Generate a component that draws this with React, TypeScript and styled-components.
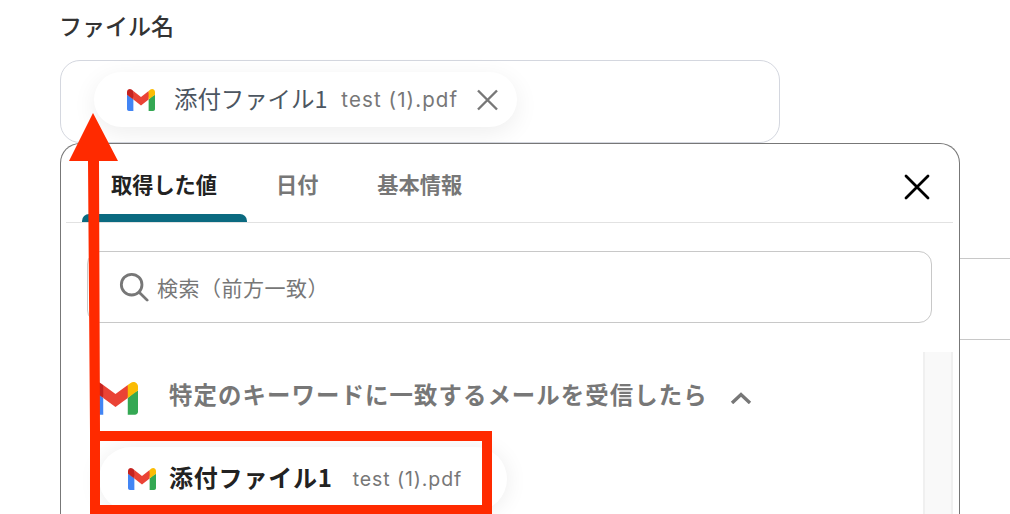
import React from "react";
import styled, { createGlobalStyle } from "styled-components";

const GlobalStyle = createGlobalStyle`
    html, body {
        margin: 0;
        padding: 0;
        background: #fff;
        font-family: "Noto Sans CJK JP", "Noto Sans", sans-serif;
    }
`;

const Page = styled.div`
    position: relative;
    width: 1010px;
    height: 514px;
    overflow: hidden;
    padding-left: 60px;
    box-sizing: border-box;
`;

const FieldLabel = styled.div`
    height: 60px;
    padding-top: 8px;
    margin-left: -1px;
    box-sizing: border-box;
    font-size: 23px;
    line-height: 34px;
    font-weight: 500;
    color: #333;
`;

const Field = styled.div`
    width: 720px;
    height: 83px;
    box-sizing: border-box;
    border: 1px solid #d4d7df;
    border-radius: 20px;
    padding: 11px 0 0 33px;
`;

const Chip = styled.div`
    display: inline-flex;
    align-items: center;
    height: 55px;
    width: 423px;
    box-sizing: border-box;
    padding-left: 33px;
    background: #fff;
    border-radius: 28px;
    box-shadow: 0 6px 24px rgba(0, 0, 0, 0.07);
`;

const ChipName = styled.span`
    margin: 0 0 3px 19px;
    font-size: 23.5px;
    line-height: 30px;
    letter-spacing: -0.1px;
    color: #4c5661;
`;

const FileName = styled.span<{ $left: number; $size: number; $spacing: number }>`
    margin-left: ${(p) => p.$left}px;
    margin-bottom: 1px;
    font-family: "Inter", "Noto Sans", sans-serif;
    font-size: ${(p) => p.$size}px;
    letter-spacing: ${(p) => p.$spacing}px;
    color: #777;
`;

const ChipClose = styled.svg`
    margin-left: 17px;
    width: 24px;
    height: 24px;
    stroke: #777;
    stroke-width: 2.4;
    fill: none;
`;

const PanelRow = styled.div`
    display: flex;
    align-items: flex-start;
`;

const Panel = styled.div`
    position: relative;
    width: 900px;
    height: 420px;
    flex: none;
    box-sizing: border-box;
    background: #fff;
    border: 1px solid #777;
    border-bottom: none;
    border-radius: 20px 20px 0 0;
    padding: 0 6px 0 5px;
`;

const BehindInput = styled.div`
    flex: 1;
    height: 80px;
    margin-top: 115px;
    border-top: 1px solid #c8c8c8;
    border-bottom: 1px solid #c8c8c8;
`;

const TabBar = styled.div`
    display: flex;
    align-items: center;
    height: 79px;
    box-sizing: border-box;
    padding-left: 16px;
    border-bottom: 1px solid #e2e2e2;
`;

const Tab = styled.div<{ $active?: boolean }>`
    position: relative;
    height: 78px;
    box-sizing: border-box;
    padding: 0 30px 0 29px;
    display: flex;
    align-items: center;
    font-size: 21.2px;
    font-weight: 700;
    color: ${(p) => (p.$active ? "#222" : "#777")};

    &::after {
        content: "";
        display: ${(p) => (p.$active ? "block" : "none")};
        position: absolute;
        left: 0;
        right: 0;
        bottom: 0;
        height: 8px;
        background: #0b6a80;
        border-radius: 7px 7px 0 0;
    }
`;

const CloseButton = styled.svg`
    margin: 7px 23px 0 auto;
    width: 26px;
    height: 26px;
    stroke: #000;
    stroke-width: 2.8;
    stroke-linecap: round;
    fill: none;
`;

const SearchBox = styled.div`
    display: flex;
    align-items: center;
    height: 72px;
    box-sizing: border-box;
    margin: 28px 21px 0 21px;
    padding-left: 31px;
    border: 1px solid #c8c8c8;
    border-radius: 13px;
`;

const SearchIcon = styled.svg`
    width: 30px;
    height: 30px;
    flex: none;
    stroke: #777;
    stroke-width: 3;
    stroke-linecap: round;
    fill: none;
`;

const SearchText = styled.span`
    margin-left: 8px;
    font-size: 21px;
    letter-spacing: 0.5px;
    color: #777;
`;

const ListArea = styled.div`
    display: flex;
    margin-top: 29px;
    height: 200px;
`;

const ListBody = styled.div`
    flex: 1;
    padding: 29px 0 0 27px;
`;

const GroupRow = styled.div`
    display: flex;
    align-items: center;
    height: 34px;
`;

const GroupTitle = styled.span`
    margin: 0 0 8px 31px;
    font-size: 23.4px;
    font-weight: 700;
    letter-spacing: 1.1px;
    color: #777;
`;

const Chevron = styled.svg`
    margin-left: 22px;
    width: 22px;
    height: 12px;
    stroke: #777;
    stroke-width: 3.4;
    fill: none;
`;

const ValueChip = styled.div`
    display: flex;
    align-items: center;
    width: 408px;
    height: 64px;
    margin: 32px 0 0 6px;
    padding-left: 29px;
    box-sizing: border-box;
    background: #fff;
    border-radius: 32px;
    box-shadow: 0 2px 22px rgba(0, 0, 0, 0.08);
`;

const ValueName = styled.span`
    margin: 0 0 5px 13px;
    font-size: 24px;
    font-weight: 700;
    letter-spacing: 0.8px;
    color: #222;
`;

const ScrollTrack = styled.div`
    width: 30px;
    flex: none;
    box-sizing: border-box;
    background: #f9f9f9;
    border-left: 2px solid #f0f0f0;
    border-right: 2px solid #f0f0f0;
`;

const Annotation = styled.svg`
    position: absolute;
    left: 0;
    top: 0;
    width: 1010px;
    height: 514px;
    pointer-events: none;
`;

const GmailMark = ({ width, height }: { width: number; height: number }) => (
    <svg width={width} height={height} viewBox="0 0 256 193" preserveAspectRatio="none" style={{ flex: "none" }}>
        <path fill="#4285F4" d="M58.182 192.05V93.14L27.507 65.077 0 49.504v125.091c0 9.658 7.825 17.455 17.455 17.455h40.727Z" />
        <path fill="#34A853" d="M197.818 192.05h40.727c9.659 0 17.455-7.826 17.455-17.455V49.505l-31.156 17.837-27.026 25.798v98.91Z" />
        <path fill="#EA4335" d="m58.182 93.14-4.174-38.647 4.174-36.989L128 69.868l69.818-52.364 4.669 34.992-4.669 40.644L128 145.504z" />
        <path fill="#FBBC04" d="M197.818 17.504V93.14L256 49.504V26.231c0-21.585-24.64-33.89-41.89-20.945l-16.292 12.218Z" />
        <path fill="#C5221F" d="M0 49.504l26.759 20.07L58.182 93.14V17.504L41.89 5.286C24.61-7.66 0 4.646 0 26.23v23.273Z" />
    </svg>
);

const App = () => {
    return (
        <Page>
            <GlobalStyle />
            <FieldLabel>ファイル名</FieldLabel>
            <Field>
                <Chip>
                    <GmailMark width={28} height={22} />
                    <ChipName>添付ファイル1</ChipName>
                    <FileName $left={14} $size={20.5} $spacing={1.1}>test (1).pdf</FileName>
                    <ChipClose viewBox="0 0 24 24">
                        <path d="M3 2.5 L22 21.5 M22 2.5 L3 21.5" />
                    </ChipClose>
                </Chip>
            </Field>
            <PanelRow>
                <Panel>
                    <TabBar>
                        <Tab $active>取得した値</Tab>
                        <Tab>日付</Tab>
                        <Tab>基本情報</Tab>
                        <CloseButton viewBox="0 0 26 26">
                            <path d="M2 2 L24 24 M24 2 L2 24" />
                        </CloseButton>
                    </TabBar>
                    <SearchBox>
                        <SearchIcon viewBox="0 0 32 32">
                            <circle cx="13.5" cy="13.5" r="11" />
                            <path d="M21.5 21.5 L30 30" />
                        </SearchIcon>
                        <SearchText>検索（前方一致）</SearchText>
                    </SearchBox>
                    <ListArea>
                        <ListBody>
                            <GroupRow>
                                <GmailMark width={45} height={33} />
                                <GroupTitle>特定のキーワードに一致するメールを受信したら</GroupTitle>
                                <Chevron viewBox="0 0 22 12">
                                    <path d="M2 11 L11 2.5 L20 11" />
                                </Chevron>
                            </GroupRow>
                            <ValueChip>
                                <GmailMark width={28} height={22} />
                                <ValueName>添付ファイル1</ValueName>
                                <FileName $left={20} $size={19.5} $spacing={0.9}>test (1).pdf</FileName>
                            </ValueChip>
                        </ListBody>
                        <ScrollTrack />
                    </ListArea>
                </Panel>
                <BehindInput />
            </PanelRow>
            <Annotation viewBox="0 0 1010 514">
                <polygon fill="#ff2a00" points="93,113 118,161 99,161 100,432 90,432 88,161 69,161" />
                <rect x="95" y="436" width="392" height="74" fill="none" stroke="#ff2a00" strokeWidth="10" />
            </Annotation>
        </Page>
    );
};

export default App;
